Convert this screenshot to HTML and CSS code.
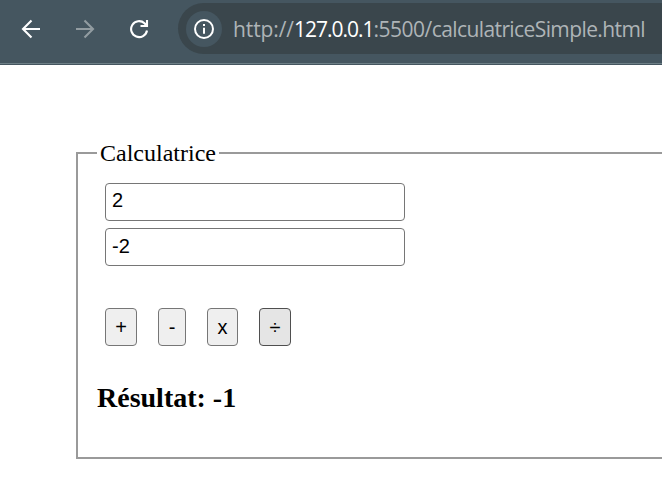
FILE: index.html
```html
<!DOCTYPE html>
<html lang="fr">
<head>
<meta charset="utf-8">
<title>Calculatrice</title>
<link rel="stylesheet" href="styles.css">
</head>
<body>
<header class="toolbar">
  <svg class="nav" viewBox="0 0 20 20"><path d="M19 10H2.500M10.500 1.500L2 10l8.500 8.500"/></svg>
  <svg class="nav nav-off" viewBox="0 0 20 20"><path d="M1 10h16.500M9.500 1.500L18 10l-8.500 8.500"/></svg>
  <svg class="nav" viewBox="0 0 20 20"><path d="M18 11.500A8 8 0 1 1 15.500 4.200L17.500 6.500M18 1v6h-6.500"/></svg>
  <div class="address">
    <span class="info"><svg viewBox="0 0 20 20"><circle cx="10" cy="10" r="9"/><path d="M10 8.800v6M10 5v2"/></svg></span>
    <span class="url"><span class="scheme">http://</span><b>127.0.0.1</b><span>:5500/</span><span class="file">calculatriceSimple.html</span></span>
  </div>
</header>
<main class="page">
  <fieldset class="calc">
    <legend>Calculatrice</legend>
    <div class="fields">
      <input class="first" type="text" value="2">
      <input type="text" value="-2">
    </div>
    <div class="ops">
      <button class="plus">+</button>
      <button class="minus">-</button>
      <button class="times">x</button>
      <button class="divide">÷</button>
    </div>
    <h3 class="result">Résultat: -1</h3>
  </fieldset>
</main>
</body>
</html>
```
FILE: styles.css
```css
* { box-sizing: border-box; }
body {
  margin: 0;
  background: #fff;
  overflow: hidden;
  font-family: "Liberation Serif", serif;
}
.toolbar {
  display: flex;
  height: 65px;
  padding: 3px 0 0 21px;
  background: linear-gradient(#6d7f86, #6d7f86) 0 63px / 100% 1px no-repeat #455660;
}
.nav {
  flex: none;
  width: 20px;
  height: 20px;
  margin: 16px 34px 0 0;
  fill: none;
  stroke: #fff;
  stroke-width: 2.1;
}
.nav-off { stroke: #929ca1; }
.address {
  display: flex;
  flex: 1;
  align-items: center;
  min-width: 0;
  height: 51px;
  margin-left: -5px;
  padding-left: 8px;
  border-radius: 26px 0 0 26px;
  background: #3a464c;
}
.info {
  display: grid;
  flex: none;
  place-items: center;
  width: 36px;
  height: 36px;
  border-radius: 50%;
  background: #455660;
}
.info svg {
  width: 20px;
  height: 20px;
  fill: none;
  stroke: #fff;
  stroke-width: 2;
}
.url {
  margin-left: 11px;
  color: #aeb4b7;
  font: 21px/30px "Open Sans", sans-serif;
  letter-spacing: -0.5px;
  white-space: nowrap;
}
.url .scheme { letter-spacing: -0.1px; }
.url b { color: #fff; font-weight: 400; letter-spacing: -1px; }
.url .file { letter-spacing: -0.6px; }
.page { padding: 75px 0 0 76px; }
.calc {
  height: 319px;
  margin: 0;
  padding: 0 19px;
  border: 2px solid #9a9a9a;
  border-right: 0;
}
.calc legend {
  padding: 0 3px;
  font-size: 24px;
  line-height: 26px;
}
.fields {
  display: flex;
  flex-direction: column;
  gap: 7px;
  margin: 17px 0 0 8px;
}
.fields input {
  width: 300px;
  height: 38px;
  padding: 0 6px 2px;
  border: 1px solid #767676;
  border-radius: 4px;
  background: #fff;
  color: #000;
  font: 20px "Liberation Sans", sans-serif;
}
.fields .first { padding-bottom: 3px; }
.ops {
  display: flex;
  gap: 21px;
  margin: 42px 0 0 8px;
}
.ops button {
  height: 38px;
  padding: 0;
  border: 1px solid #767676;
  border-radius: 4px;
  background: #efefef;
  color: #000;
  font: 20px "Liberation Sans", sans-serif;
}
.ops .plus { width: 32px; }
.ops .minus { width: 28px; }
.ops .times { width: 31px; }
.ops .divide { width: 32px; border-color: #4f4f4f; background: #e5e5e5; }
.result {
  margin: 36px 0 0;
  font-size: 28px;
  line-height: 32px;
}
```
